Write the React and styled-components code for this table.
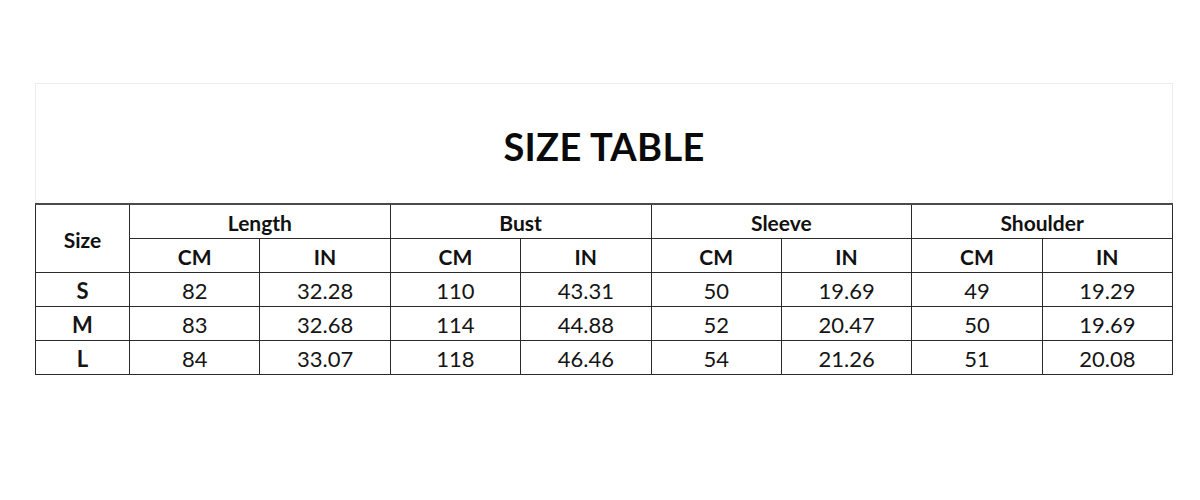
import React from "react";
import styled, { createGlobalStyle } from "styled-components";

const GlobalStyle = createGlobalStyle`
  html, body {
    margin: 0;
    padding: 0;
    background: #ffffff;
  }
  body {
    font-family: Lato, "Open Sans", "Liberation Sans", sans-serif;
    color: #111111;
  }
`;

const rows = [
  { size: "S", values: ["82", "32.28", "110", "43.31", "50", "19.69", "49", "19.29"] },
  { size: "M", values: ["83", "32.68", "114", "44.88", "52", "20.47", "50", "19.69"] },
  { size: "L", values: ["84", "33.07", "118", "46.46", "54", "21.26", "51", "20.08"] },
];

const groups = ["Length", "Bust", "Sleeve", "Shoulder"];

const App = () => {
  return (
    <Page>
      <GlobalStyle />
      <Sheet>
        <TitleBox>
          <Title>SIZE TABLE</Title>
        </TitleBox>
        <Table>
          <colgroup>
            <col style={{ width: 94 }} />
            {Array.from({ length: 8 }).map((_, i) => (
              <col key={i} />
            ))}
          </colgroup>
          <thead>
            <tr>
              <HeadCell rowSpan={2}>Size</HeadCell>
              {groups.map((g) => (
                <HeadCell key={g} colSpan={2}>
                  {g}
                </HeadCell>
              ))}
            </tr>
            <tr>
              {groups.map((g) => (
                <React.Fragment key={g}>
                  <HeadCell>CM</HeadCell>
                  <HeadCell>IN</HeadCell>
                </React.Fragment>
              ))}
            </tr>
          </thead>
          <tbody>
            {rows.map((r) => (
              <tr key={r.size}>
                <Cell bold>{r.size}</Cell>
                {r.values.map((v, i) => (
                  <Cell key={i}>{v}</Cell>
                ))}
              </tr>
            ))}
          </tbody>
        </Table>
      </Sheet>
    </Page>
  );
};

const Page = styled.div`
  width: 1200px;
  height: 500px;
  padding: 83px 0 0 35px;
  box-sizing: border-box;
`;

const Sheet = styled.div`
  width: 1138px;
`;

const TitleBox = styled.div`
  height: 120px;
  box-sizing: border-box;
  border: 1px solid #ececec;
  border-bottom: none;
  display: flex;
  align-items: center;
  justify-content: center;
  padding-top: 4px;
`;

const Title = styled.h1`
  margin: 0;
  font-size: 38px;
  font-weight: 700;
  color: #0a0a0a;
  letter-spacing: 0.3px;
`;

const Table = styled.table`
  width: 1138px;
  border-collapse: collapse;
  table-layout: fixed;
  border: 1px solid #3a3a3a;
  border-top: 2px solid #4a4a4a;
`;

const HeadCell = styled.th`
  height: 34px;
  padding: 2px 0 0;
  box-sizing: border-box;
  border: 1px solid #2a2a2a;
  font-size: 21px;
  font-weight: 700;
  text-align: center;
  vertical-align: middle;
  color: #111111;
  line-height: 1;
`;

const Cell = styled.td`
  height: 34px;
  padding: 3px 0 0;
  box-sizing: border-box;
  border: 1px solid #2a2a2a;
  font-size: 22px;
  font-weight: ${(p) => (p.bold ? 700 : 400)};
  text-align: center;
  vertical-align: middle;
  color: #151515;
  line-height: 1;
`;

export default App;
